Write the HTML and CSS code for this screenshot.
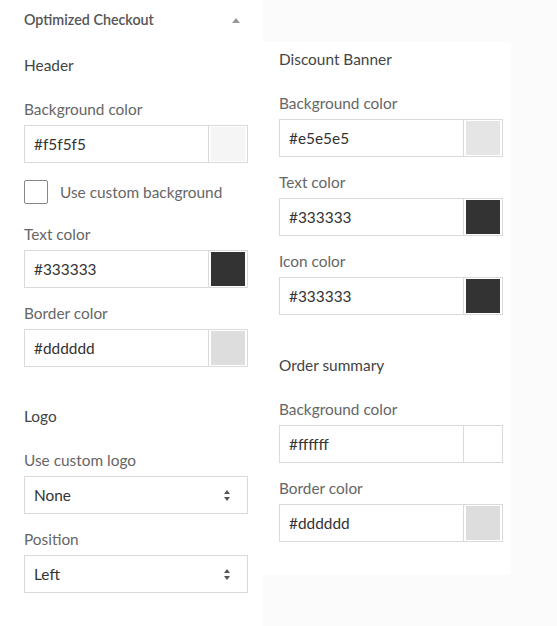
FILE: index.html
```html
<!DOCTYPE html>
<html>
<head>
<meta charset="utf-8">
<link rel="stylesheet" href="styles.css">
</head>
<body>
<div class="page">
  <div class="left">
    <div class="title-row">
      <span class="title">Optimized Checkout</span>
      <svg class="caret" width="8" height="5" viewBox="0 0 8 5"><path d="M0 5 L4 0 L8 5 Z" fill="#999"/></svg>
    </div>
    <div class="section">
      <div class="heading">Header</div>
      <div class="field">
        <div class="label">Background color</div>
        <div class="color-input"><span class="value">#f5f5f5</span><span class="swatch-box"><span class="swatch" style="background:#f5f5f5"></span></span></div>
      </div>
      <div class="check-row"><span class="checkbox"></span><span class="check-label">Use custom background</span></div>
      <div class="field after-check">
        <div class="label">Text color</div>
        <div class="color-input"><span class="value">#333333</span><span class="swatch-box"><span class="swatch" style="background:#333333"></span></span></div>
      </div>
      <div class="field">
        <div class="label">Border color</div>
        <div class="color-input"><span class="value">#dddddd</span><span class="swatch-box"><span class="swatch" style="background:#dddddd"></span></span></div>
      </div>
    </div>
    <div class="section">
      <div class="heading">Logo</div>
      <div class="field">
        <div class="label">Use custom logo</div>
        <div class="select"><span class="value">None</span><span class="arrows"><span class="up"></span><span class="down"></span></span></div>
      </div>
      <div class="field">
        <div class="label">Position</div>
        <div class="select"><span class="value">Left</span><span class="arrows"><span class="up"></span><span class="down"></span></span></div>
      </div>
    </div>
  </div>
  <div class="right">
    <div class="panel">
      <div class="section">
        <div class="heading">Discount Banner</div>
        <div class="field">
          <div class="label">Background color</div>
          <div class="color-input"><span class="value">#e5e5e5</span><span class="swatch-box"><span class="swatch" style="background:#e5e5e5"></span></span></div>
        </div>
        <div class="field">
          <div class="label">Text color</div>
          <div class="color-input"><span class="value">#333333</span><span class="swatch-box"><span class="swatch" style="background:#333333"></span></span></div>
        </div>
        <div class="field">
          <div class="label">Icon color</div>
          <div class="color-input"><span class="value">#333333</span><span class="swatch-box"><span class="swatch" style="background:#333333"></span></span></div>
        </div>
      </div>
      <div class="section">
        <div class="heading">Order summary</div>
        <div class="field">
          <div class="label">Background color</div>
          <div class="color-input"><span class="value">#ffffff</span><span class="swatch-box"><span class="swatch" style="background:#ffffff"></span></span></div>
        </div>
        <div class="field">
          <div class="label">Border color</div>
          <div class="color-input"><span class="value">#dddddd</span><span class="swatch-box"><span class="swatch" style="background:#dddddd"></span></span></div>
        </div>
      </div>
    </div>
  </div>
</div>
</body>
</html>
```
FILE: styles.css
```css
* { box-sizing: border-box; }
html, body { margin: 0; padding: 0; }
body {
  font-family: "Lato", "Liberation Sans", sans-serif;
  font-size: 15.4px;
  line-height: 20px;
  color: #666;
  background: #fff;
}
.page {
  display: flex;
  min-height: 626px;
}
.left {
  width: 263px;
  padding: 0 15px 0 24px;
  background: #fff;
}
.right {
  flex: 1;
  background: #fbfbfb;
  padding-top: 42px;
}
.panel {
  width: 248px;
  height: 533px;
  background: #fff;
  padding: 7px 8px 0 16px;
}
.title-row {
  display: flex;
  align-items: center;
  justify-content: space-between;
  height: 20px;
  margin-top: 10px;
  padding-right: 8px;
}
.title {
  font-weight: 600;
  font-size: 14.3px;
  color: #555;
}
.caret { display: block; }
.title-row + .section { margin-top: 25px; }
.section + .section { margin-top: 39px; }
.panel .section + .section { margin-top: 40px; }
.heading {
  color: #444;
  margin-bottom: 24px;
}
.field + .field { margin-top: 15px; }
.label { margin-bottom: 6px; }
.color-input, .select {
  display: flex;
  height: 38px;
  border: 1px solid #dadada;
  background: #fff;
  color: #333;
}
.value {
  flex: 1;
  display: flex;
  align-items: center;
  padding-left: 9px;
}
.swatch-box {
  width: 39px;
  border-left: 1px solid #dadada;
  padding: 1px 2px;
  display: flex;
}
.swatch { flex: 1; }
.check-row {
  display: flex;
  align-items: center;
  margin-top: 17px;
  height: 24px;
}
.checkbox {
  width: 24px;
  height: 24px;
  border: 1px solid #888;
  border-radius: 2px;
  background: #fff;
}
.check-label { margin-left: 12px; }
.field.after-check { margin-top: 20px; }
.arrows {
  width: 30px;
  display: flex;
  flex-direction: column;
  justify-content: center;
  align-items: flex-start;
  padding-left: 7px;
  gap: 3px;
}
.up, .down {
  width: 0;
  height: 0;
  border-left: 3px solid transparent;
  border-right: 3px solid transparent;
}
.up { border-bottom: 4px solid #555; }
.down { border-top: 4px solid #555; }
```
